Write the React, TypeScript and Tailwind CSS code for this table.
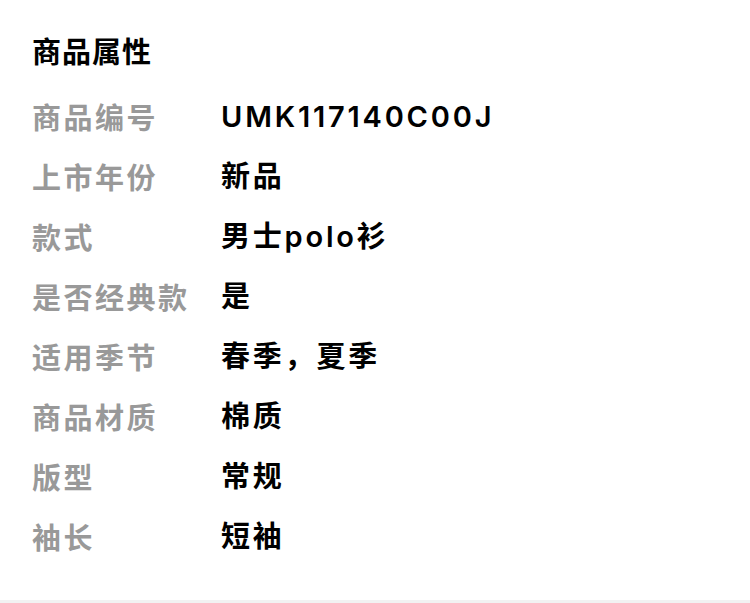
const rows: [string, string][] = [
  ["商品编号", "UMK117140C00J"],
  ["上市年份", "新品"],
  ["款式", "男士polo衫"],
  ["是否经典款", "是"],
  ["适用季节", "春季，夏季"],
  ["商品材质", "棉质"],
  ["版型", "常规"],
  ["袖长", "短袖"],
];

export default function App() {
  return (
    <div
      className="w-[750px] h-[603px] bg-[#f2f2f2]"
      style={{ fontFamily: '"Noto Sans CJK SC", "Noto Sans", sans-serif' }}
    >
      <div className="bg-white h-[600px] pl-8 pt-[30px]">
        <h2 className="text-[29px] leading-[40px] font-bold tracking-[1px] text-black">商品属性</h2>
        <div className="mt-[17px]">
          {rows.map(([k, v]) => (
            <div key={k} className="flex items-center h-[60px]">
              <div className="w-[189px] text-[29px] font-bold tracking-[2.5px] text-[#999999]">{k}</div>
              <div
                className="text-[29px] font-semibold tracking-[2.8px] text-black"
                style={{ fontFamily: 'Inter, "Noto Sans CJK SC", sans-serif' }}
              >
                {v}
              </div>
            </div>
          ))}
        </div>
      </div>
    </div>
  );
}
